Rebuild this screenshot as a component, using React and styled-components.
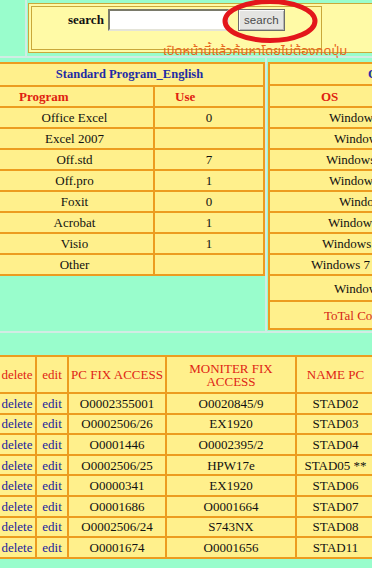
import React from "react";
import styled, { createGlobalStyle } from "styled-components";

const AQUA = "#99fdcc";
const CELL = "#fff08c";
const LINE = "#ec9c1f";
const RULE = "#d2ebe4";

const GlobalStyle = createGlobalStyle`
  html, body { margin: 0; padding: 0; background: ${AQUA}; }
  body {
    font-family: "Liberation Serif", "Times New Roman", serif;
    font-size: 13px;
    color: #111;
  }
`;

const Page = styled.div`
  position: relative;
  width: 372px;
  height: 568px;
  overflow: hidden;
  background: ${AQUA};
  display: flex;
  flex-direction: column;
`;

/* ---------- search strip ---------- */

const TopRow = styled.div`
  display: flex;
  height: 56px;
  flex-shrink: 0;
`;

const Gutter = styled.div`
  width: 25px;
  flex-shrink: 0;
  border-right: 2px solid ${RULE};
`;

const SearchFrame = styled.div`
  flex-shrink: 0;
  width: 360px;
  height: 50px;
  box-sizing: border-box;
  margin: 3px 0 0 1px;
  padding: 2px;
  background: #fffaa6;
  border: 1px solid #c9a83a;
`;

const SearchCell = styled.div`
  width: 291px;
  height: 44px;
  box-sizing: border-box;
  border: 1px solid #c9a83a;
  padding: 2px 0 0 36px;
  display: flex;
  align-items: flex-start;
  & > * { flex-shrink: 0; }
`;

const SearchLabel = styled.label`
  font-weight: bold;
  font-size: 13px;
  line-height: 22px;
  color: #111;
`;

const SearchInput = styled.input`
  width: 121px;
  height: 22px;
  box-sizing: border-box;
  margin: 0 0 0 4px;
  padding: 0 2px;
  background: #fff;
  border: 2px solid;
  border-color: #7a7a6a #e4e4d8 #e4e4d8 #7a7a6a;
`;

const SearchButton = styled.button`
  width: 47px;
  height: 22px;
  box-sizing: border-box;
  margin-left: 9px;
  padding: 0;
  background: #e4e4e2;
  border: 1px solid #6c6c6c;
  box-shadow: inset 1px 1px 0 #fafafa, inset -1px -1px 0 #b4b4b4;
  font-family: "Liberation Sans", Arial, sans-serif;
  font-size: 11.5px;
  color: #4a4a4a;
`;

const Circle = styled.svg`
  position: absolute;
  left: 219px;
  top: -4px;
  width: 102px;
  height: 50px;
`;

const Note = styled.div`
  position: absolute;
  left: 163px;
  top: 44px;
  font-family: Tahoma, "Noto Sans Thai", "Noto Serif Thai", Loma, Garuda, sans-serif;
  font-size: 13px;
  line-height: 15px;
  color: #e8641c;
  white-space: nowrap;
`;

const RuleLine = styled.div`
  height: 2px;
  flex-shrink: 0;
  background: ${RULE};
`;

/* ---------- summary tables ---------- */

const TablesRow = styled.div`
  display: flex;
  height: 273px;
  flex-shrink: 0;
`;

const LeftPane = styled.div`
  width: 271px;
  flex-shrink: 0;
  margin-left: -6px;
  padding-top: 4px;
  border-right: 2px solid ${RULE};
`;

const RightPane = styled.div`
  flex-shrink: 0;
  padding: 4px 0 0 1px;
`;

const Grid = styled.table`
  border-collapse: collapse;
  table-layout: fixed;
  background: ${CELL};
  width: ${(p) => p.$w}px;
`;

const Row = styled.tr`
  height: ${(p) => p.$h || 21}px;
`;

const Cell = styled.td`
  border: 2px solid ${LINE};
  padding: 0 1px 0 ${(p) => p.$indent || 1}px;
  text-align: ${(p) => (p.$indent ? "left" : "center")};
  vertical-align: middle;
  white-space: nowrap;
  overflow: hidden;
  color: ${(p) => (p.$red ? "#d42616" : "#111")};
  line-height: 15px;
`;

const TitleCell = styled(Cell)`
  font-weight: bold;
  color: #1f2ba6;
  font-size: 12.5px;
`;

const HeadCell = styled(Cell)`
  font-weight: bold;
  color: #df2010;
`;

const LinkCell = styled(Cell)`
  color: #1a1d9e;
`;

const ColHead = styled(Cell)`
  color: #e02414;
  white-space: normal;
  line-height: 13px;
`;

/* ---------- pc list ---------- */

const BottomArea = styled.div`
  padding-top: 22px;
  margin-left: -3px;
`;

const programs = [
  ["Office Excel", "0"],
  ["Excel 2007", ""],
  ["Off.std", "7"],
  ["Off.pro", "1"],
  ["Foxit", "0"],
  ["Acrobat", "1"],
  ["Visio", "1"],
  ["Other", ""],
];

const systems = [
  ["Windows XP", 59, 21],
  ["Windows XP SP2", 64, 21],
  ["Windows Vista", 56, 21],
  ["Windows XP Pro", 59, 21],
  ["Windows 8", 69, 21],
  ["Windows 2000", 58, 21],
  ["Windows 7 Pro", 52, 21],
  ["Windows 7 (64bit)", 41, 21],
  ["Windows 8.1", 64, 26],
];

const pcs = [
  ["O0002355001", "O0020845/9", "STAD02"],
  ["O0002506/26", "EX1920", "STAD03"],
  ["O0001446", "O0002395/2", "STAD04"],
  ["O0002506/25", "HPW17e", "STAD05 **"],
  ["O0000341", "EX1920", "STAD06"],
  ["O0001686", "O0001664", "STAD07"],
  ["O0002506/24", "S743NX", "STAD08"],
  ["O0001674", "O0001656", "STAD11"],
];

export default function App() {
  return (
    <>
      <GlobalStyle />
      <Page>
        <TopRow>
          <Gutter />
          <SearchFrame>
            <SearchCell>
              <SearchLabel>search</SearchLabel>
              <SearchInput type="text" />
              <SearchButton type="button">search</SearchButton>
            </SearchCell>
          </SearchFrame>
        </TopRow>
        <RuleLine />

        <TablesRow>
          <LeftPane>
            <Grid $w={269}>
              <colgroup>
                <col style={{ width: 159 }} />
                <col style={{ width: 110 }} />
              </colgroup>
              <tbody>
                <Row $h={23}>
                  <TitleCell colSpan={2}>Standard Program_English</TitleCell>
                </Row>
                <Row>
                  <HeadCell $indent={23}>Program</HeadCell>
                  <HeadCell $indent={20}>Use</HeadCell>
                </Row>
                {programs.map(([name, use]) => (
                  <Row key={name}>
                    <Cell>{name}</Cell>
                    <Cell>{use}</Cell>
                  </Row>
                ))}
              </tbody>
            </Grid>
          </LeftPane>

          <RightPane>
            <Grid $w={230}>
              <colgroup>
                <col style={{ width: 150 }} />
                <col style={{ width: 80 }} />
              </colgroup>
              <tbody>
                <Row $h={22}>
                  <TitleCell colSpan={2} $indent={98}>OS Windows</TitleCell>
                </Row>
                <Row $h={22}>
                  <HeadCell $indent={51}>OS</HeadCell>
                  <HeadCell $indent={20}>Use</HeadCell>
                </Row>
                {systems.map(([name, indent, h]) => (
                  <Row key={name} $h={h}>
                    <Cell $indent={indent}>{name}</Cell>
                    <Cell>1</Cell>
                  </Row>
                ))}
                <Row $h={28}>
                  <Cell $indent={54} $red>ToTal Computer</Cell>
                  <Cell $red>34</Cell>
                </Row>
              </tbody>
            </Grid>
          </RightPane>
        </TablesRow>
        <RuleLine />

        <BottomArea>
          <Grid $w={377}>
            <colgroup>
              <col style={{ width: 38 }} />
              <col style={{ width: 32 }} />
              <col style={{ width: 98 }} />
              <col style={{ width: 130 }} />
              <col style={{ width: 79 }} />
            </colgroup>
            <tbody>
              <Row $h={37}>
                <ColHead>delete</ColHead>
                <ColHead>edit</ColHead>
                <ColHead>PC FIX ACCESS</ColHead>
                <ColHead>MONITER FIX ACCESS</ColHead>
                <ColHead>NAME PC</ColHead>
              </Row>
              {pcs.map(([pc, mon, name]) => (
                <Row key={name} $h={20.6}>
                  <LinkCell>delete</LinkCell>
                  <LinkCell>edit</LinkCell>
                  <Cell>{pc}</Cell>
                  <Cell>{mon}</Cell>
                  <Cell>{name}</Cell>
                </Row>
              ))}
            </tbody>
          </Grid>
        </BottomArea>

        <Circle viewBox="0 0 102 50">
          <ellipse cx="51" cy="25" rx="45" ry="19.5" fill="none" stroke="#e3161b" strokeWidth="5" />
        </Circle>
        <Note>เปิดหน้านี้แล้วค้นหาโดยไม่ต้องกดปุ่ม</Note>
      </Page>
    </>
  );
}
